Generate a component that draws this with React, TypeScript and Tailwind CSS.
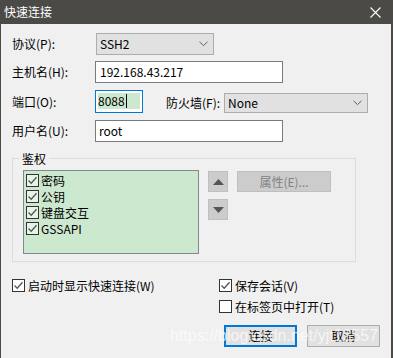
import React from "react";

const font = { fontFamily: '"Noto Sans CJK SC", "Noto Sans", sans-serif' };

function Chevron() {
  return (
    <svg width="9" height="6" viewBox="0 0 9 6" className="shrink-0">
      <path d="M0.5 0.8 L4.5 4.6 L8.5 0.8" fill="none" stroke="#606060" strokeWidth="1" />
    </svg>
  );
}

function Check({ checked, bg = "bg-white" }: { checked: boolean; bg?: string }) {
  return (
    <div className={`w-[13px] h-[13px] border border-[#333333] ${bg} shrink-0 flex items-center justify-center`}>
      {checked && (
        <svg width="11" height="11" viewBox="0 0 11 11">
          <path d="M1.5 5.5 L4.2 8.2 L9.5 2.2" fill="none" stroke="#555555" strokeWidth="1.3" />
        </svg>
      )}
    </div>
  );
}

export default function App() {
  return (
    <div
      className="w-[393px] h-[358px] bg-[#f0f0f0] border-l border-r-2 border-[#4b4a47] relative overflow-hidden text-[12px] text-black leading-none"
      style={font}
    >
      {/* Title bar */}
      <div className="h-[24px] bg-[#4b4a47] flex items-center justify-between pl-[3px] pr-[10px]">
        <span className="text-white text-[12px] leading-none">快速连接</span>
        <svg width="11" height="11" viewBox="0 0 11 11">
          <path d="M0.5 0.5 L10.5 10.5 M10.5 0.5 L0.5 10.5" stroke="#ffffff" strokeWidth="1.1" />
        </svg>
      </div>

      <div className="pl-[11px] pt-[9px]">
        {/* Row 1 */}
        <div className="flex items-center h-[22px]">
          <div className="w-[84px]">协议(P):</div>
          <div className="w-[118px] h-[22px] bg-[#e1e1e1] border border-[#adadad] flex items-center justify-between pl-[3px] pr-[5px]">
            <span>SSH2</span>
            <Chevron />
          </div>
        </div>

        {/* Row 2 */}
        <div className="flex items-center h-[22px] mt-[6px]">
          <div className="w-[83px]">主机名(H):</div>
          <div className="w-[188px] h-[22px] bg-white border border-[#7a7a7a] flex items-center pl-[4px]">
            192.168.43.217
          </div>
        </div>

        {/* Row 3 */}
        <div className="flex items-start h-[23px] mt-[7px]">
          <div className="w-[83px] h-[23px] flex items-center">端口(O):</div>
          <div className="w-[48px] h-[23px] bg-white border border-[#0078d7] pl-[2px] pt-[2px]">
            <div className="w-[42px] h-[16px] bg-[#cce8cf] flex items-center">
              <span>8088</span>
              <span className="w-[1px] h-[14px] bg-black ml-[1px]" />
            </div>
          </div>
          <div className="ml-[23px] w-[58px] h-[23px] flex items-center pt-[2px]">防火墙(F):</div>
          <div className="mt-[3px] w-[144px] h-[20px] bg-[#e1e1e1] border border-[#adadad] flex items-center justify-between pl-[3px] pr-[5px]">
            <span>None</span>
            <Chevron />
          </div>
        </div>

        {/* Row 4 */}
        <div className="flex items-center h-[22px] mt-[7px]">
          <div className="w-[83px]">用户名(U):</div>
          <div className="w-[188px] h-[22px] bg-white border border-[#7a7a7a] flex items-center pl-[3px]">
            root
          </div>
        </div>

        {/* Group box */}
        <div className="relative mt-[16px] w-[344px] h-[104px] border border-[#dcdcdc] pl-[10px] pt-[11px] flex items-start">
          <div className="absolute left-[6px] -top-[8px] px-[3px] bg-[#f0f0f0] h-[16px] flex items-center">鉴权</div>
          <div className="w-[176px] h-[84px] bg-[#cce8cf] border border-[#828790] pl-[2px] pt-[3px] flex flex-col gap-[3px]">
            {["密码", "公钥", "键盘交互", "GSSAPI"].map((t) => (
              <div key={t} className="flex items-center h-[13px]">
                <Check checked bg="bg-[#e6f3e8]" />
                <span className="ml-[2px]">{t}</span>
              </div>
            ))}
          </div>
          <div className="ml-[9px] mt-[1px] flex flex-col gap-[7px]">
            <div className="w-[20px] h-[21px] bg-[#cccccc] border border-[#bfbfbf] flex items-center justify-center">
              <svg width="11" height="6" viewBox="0 0 11 6">
                <path d="M0 6 L5.5 0 L11 6 Z" fill="#555555" />
              </svg>
            </div>
            <div className="w-[20px] h-[21px] bg-[#cccccc] border border-[#bfbfbf] flex items-center justify-center">
              <svg width="11" height="6" viewBox="0 0 11 6">
                <path d="M0 0 L5.5 6 L11 0 Z" fill="#555555" />
              </svg>
            </div>
          </div>
          <div className="ml-[9px] mt-[1px] w-[94px] h-[21px] bg-[#cccccc] border border-[#bfbfbf] flex items-center justify-center text-[#838383]">
            属性(E)...
          </div>
        </div>

        {/* Bottom checkboxes */}
        <div className="flex items-center h-[13px] mt-[17px]">
          <div className="w-[207px] flex items-center">
            <Check checked />
            <span className="ml-[3px]">启动时显示快速连接(W)</span>
          </div>
          <div className="flex items-center">
            <Check checked />
            <span className="ml-[3px]">保存会话(V)</span>
          </div>
        </div>
        <div className="flex items-center h-[13px] mt-[8px]">
          <div className="w-[207px]" />
          <div className="flex items-center">
            <Check checked={false} />
            <span className="ml-[3px]">在标签页中打开(T)</span>
          </div>
        </div>

        {/* Buttons */}
        <div className="flex mt-[12px] ml-[212px] gap-[10px]">
          <div className="w-[73px] h-[22px] bg-[#e1e1e1] border-2 border-[#0078d7] flex items-center justify-center">连接</div>
          <div className="w-[73px] h-[22px] bg-[#e1e1e1] border border-[#adadad] flex items-center justify-center">取消</div>
        </div>
      </div>

      {/* Watermark */}
      <div
        className="absolute left-[169px] top-[328px] text-[16px] leading-none text-white/70 pointer-events-none"
        style={{ fontFamily: '"Liberation Sans", Arial, sans-serif' }}
      >
        https://blog.csdn.net/yjt13557
      </div>
    </div>
  );
}
